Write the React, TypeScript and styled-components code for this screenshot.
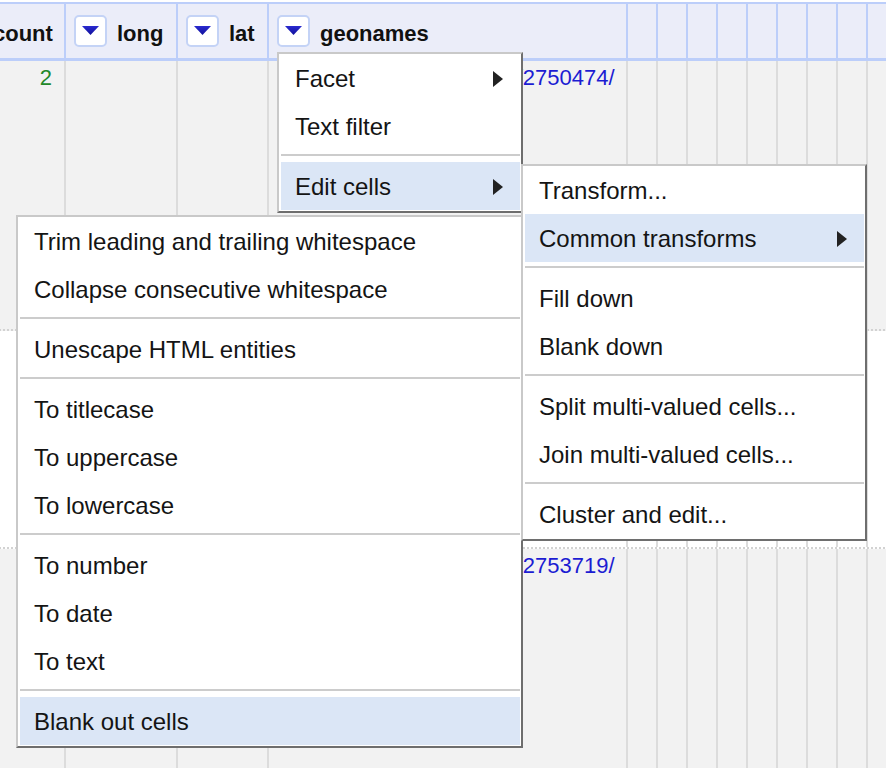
import React from "react";
import styled, { createGlobalStyle } from "styled-components";

const Global = createGlobalStyle`
  html, body { margin: 0; padding: 0; background: #ffffff; overflow: hidden; }
  body { font-family: "Liberation Sans", Arial, Helvetica, sans-serif; width: 886px; height: 768px; }
  #root { position: relative; width: 886px; height: 768px; overflow: hidden; }
`;

const COLS = "124px 112px 91px 359px repeat(9, 30px)";

const Page = styled.div`
  position: relative;
  width: 886px;
  height: 768px;
  overflow: hidden;
  padding-top: 2px;
  box-sizing: border-box;
`;

const Table = styled.div`
  margin-left: -60px;
  width: 956px;
  display: flex;
  flex-direction: column;
`;

const HeaderRow = styled.div`
  display: grid;
  grid-template-columns: ${COLS};
  background: #ebedf9;
  border-top: 2px solid #bccefa;
  border-bottom: 3px solid #bccefa;
`;

const HeaderCell = styled.div`
  box-sizing: border-box;
  height: 54px;
  border-left: 2px solid #bccefa;
  display: flex;
  align-items: center;
  gap: 10px;
  padding-left: 8px;
  overflow: hidden;
  white-space: nowrap;
  font-weight: bold;
  font-size: 22px;
  color: #111111;
`;

const HeaderLabel = styled.span`
  padding-top: 5px;
`;

const DropButton = styled.div`
  box-sizing: border-box;
  flex: none;
  width: 33px;
  height: 32px;
  margin-top: -1px;
  background: #ffffff;
  border: 2px solid #c4d3f6;
  border-radius: 5px;
  display: flex;
  align-items: center;
  justify-content: center;
`;

const DataRow = styled.div<{ $h: number; $bg: string }>`
  display: grid;
  grid-template-columns: ${COLS};
  height: ${(p) => p.$h}px;
  background: ${(p) => p.$bg};
  border-bottom: 2px dotted #d2d2d2;
`;

const DataCell = styled.div<{ $align?: "left" | "right" }>`
  box-sizing: border-box;
  border-left: 2px solid #dcdcdc;
  padding: 4px 12px 4px 8px;
  display: flex;
  align-items: flex-start;
  justify-content: ${(p) => (p.$align === "right" ? "flex-end" : "flex-start")};
  overflow: hidden;
  white-space: nowrap;
  font-size: 22px;
  line-height: 26px;
`;

const Count = styled.span`
  color: #23892a;
`;

const Link = styled.span`
  color: #1c1cd2;
`;

const Menu = styled.div<{ $x: number; $y: number; $w: number; $z: number }>`
  position: absolute;
  left: ${(p) => p.$x}px;
  top: ${(p) => p.$y}px;
  width: ${(p) => p.$w}px;
  z-index: ${(p) => p.$z};
  box-sizing: border-box;
  background: #ffffff;
  border: 2px solid #c9c9c9;
  border-right-color: #6e6e6e;
  border-bottom-color: #6e6e6e;
  padding: 0 1px 1px 2px;
`;

const Item = styled.div<{ $active?: boolean }>`
  box-sizing: border-box;
  height: 48px;
  display: flex;
  align-items: center;
  justify-content: space-between;
  padding: 2px 17px 0 14px;
  font-size: 24px;
  color: #141414;
  white-space: nowrap;
  background: ${(p) => (p.$active ? "#dbe6f6" : "transparent")};
`;

const Sep = styled.div`
  height: 2px;
  margin: 4px 0 6px;
  background: #cccccc;
`;

const Arrow = () => (
  <svg width="10" height="16" viewBox="0 0 10 16" aria-hidden>
    <polygon points="0,0 10,8 0,16" fill="#222222" />
  </svg>
);

const DownTri = () => (
  <svg width="17" height="9" viewBox="0 0 17 9" aria-hidden>
    <defs>
      <linearGradient id="tri" x1="0" y1="0" x2="0" y2="1">
        <stop offset="0" stopColor="#2a2ad0" />
        <stop offset="1" stopColor="#10109a" />
      </linearGradient>
    </defs>
    <polygon points="0,0 17,0 8.5,9" fill="url(#tri)" />
  </svg>
);

type Entry = { label: string; sub?: boolean; active?: boolean } | "sep";

const MenuList = ({ items }: { items: Entry[] }) => (
  <>
    {items.map((it, i) =>
      it === "sep" ? (
        <Sep key={i} />
      ) : (
        <Item key={i} $active={it.active}>
          <span>{it.label}</span>
          {it.sub && <Arrow />}
        </Item>
      )
    )}
  </>
);

const headers = ["count", "long", "lat", "geonames"];
const narrow = Array.from({ length: 9 });

const Row = ({ h, bg, count, link }: { h: number; bg: string; count?: string; link?: string }) => (
  <DataRow $h={h} $bg={bg}>
    <DataCell $align="right">{count && <Count>{count}</Count>}</DataCell>
    <DataCell />
    <DataCell />
    <DataCell>{link && <Link>{link}</Link>}</DataCell>
    {narrow.map((_, i) => (
      <DataCell key={i} />
    ))}
  </DataRow>
);

const columnMenu: Entry[] = [
  { label: "Facet", sub: true },
  { label: "Text filter" },
  "sep",
  { label: "Edit cells", sub: true, active: true },
];

const editMenu: Entry[] = [
  { label: "Transform..." },
  { label: "Common transforms", sub: true, active: true },
  "sep",
  { label: "Fill down" },
  { label: "Blank down" },
  "sep",
  { label: "Split multi-valued cells..." },
  { label: "Join multi-valued cells..." },
  "sep",
  { label: "Cluster and edit..." },
];

const commonMenu: Entry[] = [
  { label: "Trim leading and trailing whitespace" },
  { label: "Collapse consecutive whitespace" },
  "sep",
  { label: "Unescape HTML entities" },
  "sep",
  { label: "To titlecase" },
  { label: "To uppercase" },
  { label: "To lowercase" },
  "sep",
  { label: "To number" },
  { label: "To date" },
  { label: "To text" },
  "sep",
  { label: "Blank out cells", active: true },
];

export default function App() {
  return (
    <Page>
      <Global />
      <Table>
        <HeaderRow>
          {headers.map((h) => (
            <HeaderCell key={h}>
              <DropButton>
                <DownTri />
              </DropButton>
              <HeaderLabel>{h}</HeaderLabel>
            </HeaderCell>
          ))}
          {narrow.map((_, i) => (
            <HeaderCell key={i} />
          ))}
        </HeaderRow>
        <Row h={268} bg="#f2f2f2" count="2" link="http://sws.geonames.org/2750474/" />
        <Row h={216} bg="#ffffff" />
        <Row h={260} bg="#f2f2f2" link="http://sws.geonames.org/2753719/" />
      </Table>

      <Menu $x={277} $y={52} $w={246} $z={1}>
        <MenuList items={columnMenu} />
      </Menu>
      <Menu $x={16} $y={215} $w={507} $z={2}>
        <MenuList items={commonMenu} />
      </Menu>
      <Menu $x={521} $y={164} $w={346} $z={3}>
        <MenuList items={editMenu} />
      </Menu>
    </Page>
  );
}
